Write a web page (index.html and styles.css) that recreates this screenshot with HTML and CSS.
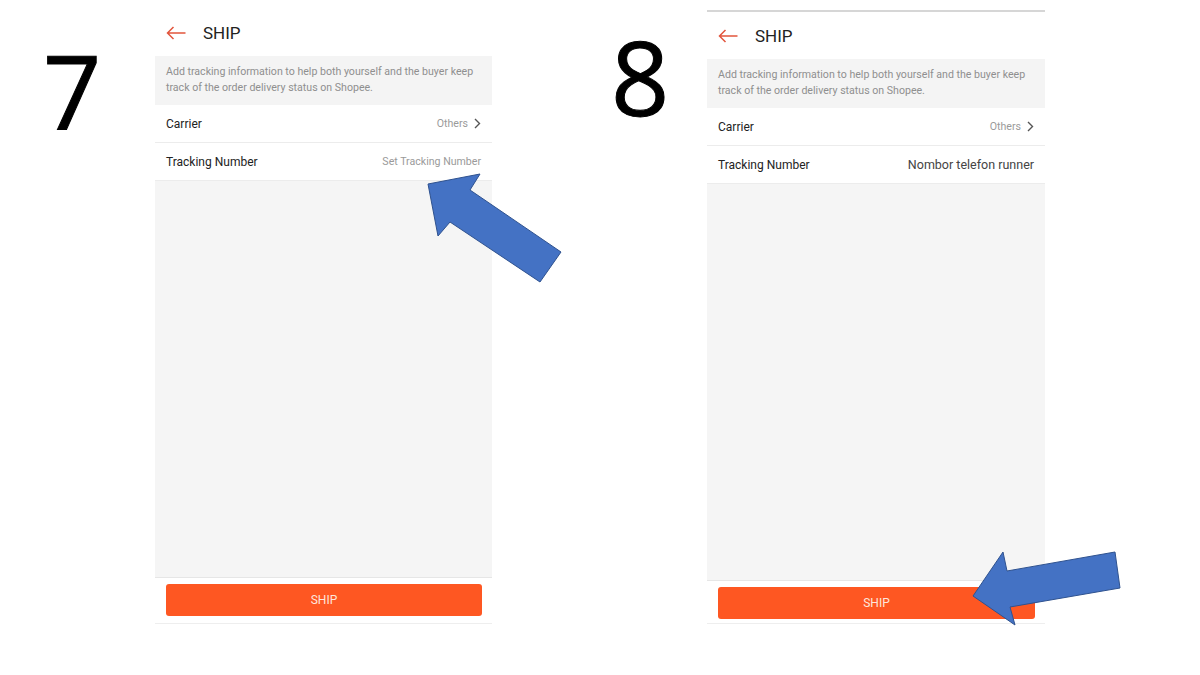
FILE: index.html
```html
<!DOCTYPE html>
<html lang="en">

<head>
    <meta charset="UTF-8">
    <meta name="viewport" content="width=device-width, initial-scale=1.0">
    <title>Ship Order - Steps 7 and 8</title>
    <link rel="stylesheet" href="styles.css">
</head>

<body>
    <div class="slide">
        <!-- Step 7 -->
        <div class="step step-seven">7</div>
        <section class="phone">
            <header class="topbar">
                <svg class="back" width="20" height="14" viewBox="0 0 20 14">
                    <path d="M19.5 7H1.5M7.5 1L1.5 7l6 6" fill="none" stroke="#e2553d" stroke-width="1.5" />
                </svg>
                <h1>SHIP</h1>
            </header>
            <p class="hint">Add tracking information to help both yourself and the buyer keep<br>track of the order delivery status on Shopee.</p>
            <div class="row">
                <span class="label">Carrier</span>
                <span class="value">Others
                    <svg class="chev" width="7" height="11" viewBox="0 0 7 11">
                        <path d="M1 1l4.5 4.5L1 10" fill="none" stroke="#555" stroke-width="1.4" />
                    </svg>
                </span>
            </div>
            <div class="row">
                <span class="label">Tracking Number</span>
                <span class="value">Set Tracking Number</span>
            </div>
            <div class="filler"></div>
            <footer class="actions">
                <button type="button" class="ship-btn">SHIP</button>
            </footer>
        </section>

        <!-- Step 8 -->
        <div class="step step-eight">8</div>
        <section class="phone phone-filled">
            <header class="topbar">
                <svg class="back" width="20" height="14" viewBox="0 0 20 14">
                    <path d="M19.5 7H1.5M7.5 1L1.5 7l6 6" fill="none" stroke="#e2553d" stroke-width="1.5" />
                </svg>
                <h1>SHIP</h1>
            </header>
            <p class="hint">Add tracking information to help both yourself and the buyer keep<br>track of the order delivery status on Shopee.</p>
            <div class="row">
                <span class="label">Carrier</span>
                <span class="value">Others
                    <svg class="chev" width="7" height="11" viewBox="0 0 7 11">
                        <path d="M1 1l4.5 4.5L1 10" fill="none" stroke="#555" stroke-width="1.4" />
                    </svg>
                </span>
            </div>
            <div class="row">
                <span class="label">Tracking Number</span>
                <span class="value value-set">Nombor telefon runner</span>
            </div>
            <div class="filler"></div>
            <footer class="actions">
                <button type="button" class="ship-btn">SHIP</button>
            </footer>
        </section>

        <!-- callout arrows drawn over the screens -->
        <svg class="pointers" width="1200" height="675" viewBox="0 0 1200 675">
            <polygon points="428,184 480,174 470,190 561,252 540,282 450,222 438,236" fill="#4472c4" stroke="#2f528f" stroke-width="1" />
            <polygon points="973,596 1003,552 1007,571 1115,552 1120,588 1010,607 1015,625" fill="#4472c4" stroke="#2f528f" stroke-width="1" />
        </svg>
    </div>
</body>

</html>
```

FILE: styles.css
```css
/* Slide with two phone screens */
body {
    margin: 0;
    background: #fff;
    font-family: Roboto, "Liberation Sans", sans-serif;
}

.slide {
    position: relative;
    width: 1200px;
    height: 675px;
    display: flex;
    align-items: flex-start;
    overflow: hidden;
}

.step {
    flex-shrink: 0;
    font-family: "Open Sans", Lato, sans-serif;
    font-size: 102px;
    line-height: 1;
    color: #000;
    -webkit-text-stroke: 1px #000;
}

.step-seven {
    width: 112px;
    padding: 40px 0 0 43px;
}

.step-eight {
    width: 96px;
    padding: 26px 0 0 119px;
}

.phone {
    flex-shrink: 0;
    width: 337px;
    height: 613px;
    margin-top: 10px;
    display: flex;
    flex-direction: column;
    background: #fff;
    border-bottom: 1px solid #eee;
}

.phone-filled {
    width: 338px;
    height: 611px;
    border-top: 2px solid #d6d6d6;
}

.topbar {
    height: 46px;
    display: flex;
    align-items: center;
    padding-left: 11px;
}

.phone-filled .topbar {
    height: 47px;
}

.back {
    margin-right: 17px;
}

.topbar h1 {
    margin: 0;
    font-size: 17px;
    font-weight: 400;
    color: #222;
}

.hint {
    margin: 0;
    height: 49px;
    box-sizing: border-box;
    padding: 8px 11px;
    background: #f4f4f4;
    font-size: 10.6px;
    line-height: 16px;
    color: #8f8f8f;
    white-space: nowrap;
}

.row {
    height: 37px;
    display: flex;
    align-items: center;
    justify-content: space-between;
    padding: 0 11px;
    border-bottom: 1px solid #ececec;
}

.label {
    font-size: 12px;
    color: #222;
}

.value {
    display: flex;
    align-items: center;
    gap: 6px;
    font-size: 10.6px;
    color: #9a9a9a;
}

.value-set {
    font-size: 12.5px;
    color: #444;
}

.filler {
    flex: 1;
    background: #f5f5f5;
}

.actions {
    padding: 6px 10px 7px 11px;
    border-top: 1px solid #e6e6e6;
}

.phone-filled .actions {
    padding-bottom: 4px;
}

.ship-btn {
    width: 100%;
    height: 32px;
    border: none;
    border-radius: 3px;
    background: #fe5722;
    color: #fde6dc;
    font-family: Roboto, "Liberation Sans", sans-serif;
    font-size: 12px;
    cursor: pointer;
}

.pointers {
    position: absolute;
    left: 0;
    top: 0;
    pointer-events: none;
}
```
